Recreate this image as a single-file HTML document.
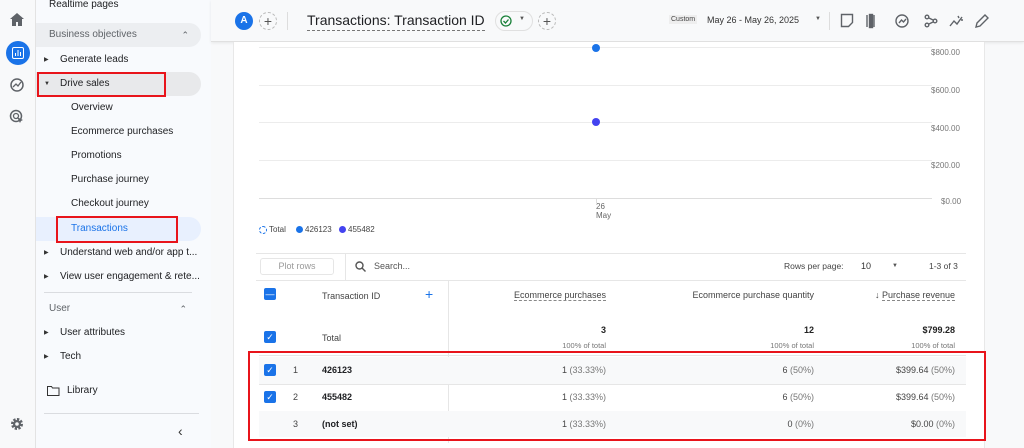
<!DOCTYPE html>
<html><head><meta charset="utf-8"><style>
*{box-sizing:border-box;margin:0;padding:0}
body{width:1024px;height:448px;overflow:hidden;background:#f8f9fa;font-family:"Liberation Sans",Arial,sans-serif;color:#202124;position:relative;font-size:10px}
.abs{position:absolute}
.rail{left:0;top:0;width:36px;height:448px;background:#f8f9fa;border-right:1px solid #e3e3e3}
.nav{left:36px;top:0;width:175px;height:448px;background:#f8fafd}
.nav .it{position:absolute;left:0;width:165px;height:24px;line-height:24px;font-size:10px;color:#202124}
.tri{position:absolute;left:8px;top:0;font-size:6px;color:#333}
.card{left:233px;top:42px;width:752px;height:406px;background:#fff;border-left:1px solid #e8e8e8;border-right:1px solid #e8e8e8}
.grid{position:absolute;left:259px;width:673px;height:1px;background:#ececec}
.yl{position:absolute;left:931px;font-size:8px;color:#777}
.cb{position:absolute;width:12px;height:12px;background:#1a73e8;border-radius:2px;color:#fff;font-size:9px;line-height:12px;text-align:center}
.r{position:absolute;text-align:right;font-size:9px;color:#444}
.g{color:#777}
</style></head><body>
<div class="abs rail">
 <svg class="abs" style="left:10px;top:13px" width="14" height="13" viewBox="0 0 14 13"><path d="M7 0L0 6h2v7h4V9h2v4h4V6h2z" fill="#5f6368"/></svg>
 <div class="abs" style="left:6px;top:41px;width:24px;height:24px;border-radius:12px;background:#1a73e8"></div>
 <svg class="abs" style="left:12px;top:47px" width="12" height="12"><rect x="0.5" y="0.5" width="11" height="11" rx="1.5" fill="none" stroke="#fff"/><path d="M3.5 9V6M6 9V3M8.5 9V5" stroke="#fff"/></svg>
 <svg class="abs" style="left:9px;top:77px" width="16" height="16"><circle cx="8" cy="8" r="6" fill="none" stroke="#5f6368" stroke-width="1.5"/><path d="M4 10l3-3 2 2 3-4" fill="none" stroke="#5f6368" stroke-width="1.3"/></svg>
 <svg class="abs" style="left:9px;top:109px" width="16" height="16"><circle cx="7" cy="7" r="5.5" fill="none" stroke="#5f6368" stroke-width="1.5"/><circle cx="7" cy="7" r="2.5" fill="none" stroke="#5f6368" stroke-width="1.3"/><path d="M8 8l6 3-2 1-1 2z" fill="#5f6368"/></svg>
 <svg class="abs" style="left:10px;top:417px" width="14" height="14" viewBox="0 0 14 14"><circle cx="7" cy="7" r="4.5" fill="none" stroke="#5f6368" stroke-width="3" stroke-dasharray="2.2 1.3"/><circle cx="7" cy="7" r="4" fill="#5f6368"/><circle cx="7" cy="7" r="1.8" fill="#f8f9fa"/></svg>
</div>
<div class="abs nav">
 <div class="it" style="top:-7px;left:13px">Realtime pages</div>
 <div class="it" style="top:23px;background:#eceef1;border-radius:0 12px 12px 0;padding-left:13px;color:#5f6368">Business objectives<span style="position:absolute;right:12px;font-size:9px">&#8963;</span></div>
 <div class="it" style="top:48px"><span class="tri">&#9654;</span><span style="margin-left:24px">Generate leads</span></div>
 <div class="it" style="top:72px;background:#e8e9eb;border-radius:0 12px 12px 0"><span class="tri">&#9660;</span><span style="margin-left:24px">Drive sales</span></div>
 <div class="abs" style="left:1px;top:72px;width:129px;height:25px;border:2px solid #e8141b"></div>
 <div class="it" style="top:96px;padding-left:35px">Overview</div>
 <div class="it" style="top:120px;padding-left:35px">Ecommerce purchases</div>
 <div class="it" style="top:144px;padding-left:35px">Promotions</div>
 <div class="it" style="top:168px;padding-left:35px">Purchase journey</div>
 <div class="it" style="top:192px;padding-left:35px">Checkout journey</div>
 <div class="it" style="top:217px;background:#e8f0fe;border-radius:0 12px 12px 0;padding-left:35px;color:#1a73e8">Transactions</div>
 <div class="abs" style="left:20px;top:216px;width:122px;height:27px;border:2px solid #e8141b"></div>
 <div class="it" style="top:241px;white-space:nowrap;overflow:hidden"><span class="tri">&#9654;</span><span style="margin-left:24px">Understand web and/or app t...</span></div>
 <div class="it" style="top:265px;white-space:nowrap;overflow:hidden"><span class="tri">&#9654;</span><span style="margin-left:24px">View user engagement &amp; rete...</span></div>
 <div class="abs" style="left:8px;top:292px;width:148px;height:1px;background:#dadce0"></div>
 <div class="it" style="top:297px;padding-left:13px;color:#5f6368">User<span style="position:absolute;right:14px;font-size:9px">&#8963;</span></div>
 <div class="it" style="top:321px"><span class="tri">&#9654;</span><span style="margin-left:24px">User attributes</span></div>
 <div class="it" style="top:345px"><span class="tri">&#9654;</span><span style="margin-left:24px">Tech</span></div>
 <svg class="abs" style="left:11px;top:386px" width="13" height="10"><path d="M0.5 0.5h4l1 1.5h6.5v7.5h-11.5z" fill="none" stroke="#333"/></svg>
 <div class="it" style="top:379px;padding-left:31px">Library</div>
 <div class="abs" style="left:8px;top:413px;width:155px;height:1px;background:#dadce0"></div>
 <div class="abs" style="left:142px;top:423px;font-size:14px;color:#333">&#8249;</div>
</div>
<div class="abs" style="left:211px;top:0;width:813px;height:42px;background:#f8f9fa;border-bottom:1px solid #e0e0e0;box-shadow:0 1px 3px rgba(0,0,0,.08)"></div>
<div class="abs" style="left:235px;top:12px;width:18px;height:18px;border-radius:9px;background:#1a73e8;color:#fff;font-size:10px;font-weight:bold;text-align:center;line-height:18px">A</div>
<div class="abs" style="left:259px;top:12px;width:18px;height:18px;border-radius:9px;border:1px dashed #bbb;text-align:center;line-height:16px;font-size:14px;color:#555">+</div>
<div class="abs" style="left:287px;top:12px;width:1px;height:18px;background:#ddd"></div>
<div class="abs" style="left:307px;top:11px;font-size:14px;color:#202124;border-bottom:1px dashed #777;line-height:19px;white-space:nowrap">Transactions: Transaction ID</div>
<div class="abs" style="left:495px;top:11px;width:38px;height:20px;border:1px solid #e0e0e0;border-radius:10px;background:#f8f9fa"></div>
<svg class="abs" style="left:500px;top:15px" width="12" height="12"><circle cx="6" cy="6" r="5" fill="none" stroke="#188038" stroke-width="1.3"/><path d="M3.5 6l2 2 3-3.5" fill="none" stroke="#188038" stroke-width="1.3"/></svg>
<div class="abs" style="left:519px;top:16px;font-size:6px;color:#555">&#9660;</div>
<div class="abs" style="left:538px;top:12px;width:18px;height:18px;border-radius:9px;border:1px dashed #bbb;text-align:center;line-height:16px;font-size:14px;color:#555">+</div>
<div class="abs" style="left:669px;top:15px;font-size:7px;color:#444;background:#eee;padding:1px 2px">Custom</div>
<div class="abs" style="left:707px;top:15px;font-size:9px;color:#333">May 26 - May 26, 2025</div>
<div class="abs" style="left:815px;top:16px;font-size:6px;color:#555">&#9660;</div>
<div class="abs" style="left:829px;top:12px;width:1px;height:18px;background:#ddd"></div>
<svg class="abs" style="left:840px;top:13px" width="150" height="16" fill="none" stroke="#5f6368" stroke-width="1.4">
 <path d="M1.5 1.5h11v8l-4 4h-7z"/>
 <path d="M27 2v12M34 2v12"/><rect x="29.5" y="1.5" width="3" height="13" fill="#5f6368"/>
 <circle cx="62" cy="8" r="6"/><path d="M59 10l2.5-3 2 2 2.5-3"/>
 <circle cx="95" cy="8" r="1.8"/><circle cx="87" cy="4" r="1.8"/><circle cx="87" cy="12" r="1.8"/><path d="M89 5l4 2M89 11l4-2"/>
 <path d="M110 13l4-5 3 3 5-7M118 3l1 2M121 7l2 0"/>
 <path d="M136 14l1-4 8-8 3 3-8 8z"/>
</svg>
<div class="abs card"></div>
<div class="grid" style="top:47px"></div>
<div class="grid" style="top:85px"></div>
<div class="grid" style="top:122px"></div>
<div class="grid" style="top:160px"></div>
<div class="grid" style="top:198px;background:#ddd"></div>
<div class="abs" style="left:596px;top:198px;width:1px;height:5px;background:#ddd"></div>
<div class="yl" style="top:48px">$800.00</div>
<div class="yl" style="top:86px">$600.00</div>
<div class="yl" style="top:124px">$400.00</div>
<div class="yl" style="top:161px">$200.00</div>
<div class="yl" style="top:197px;left:941px">$0.00</div>
<div class="abs" style="left:592px;top:44px;width:8px;height:8px;border-radius:4px;background:#1a73e8"></div>
<div class="abs" style="left:592px;top:118px;width:8px;height:8px;border-radius:4px;background:#4343f0"></div>
<div class="abs" style="left:596px;top:202px;font-size:8px;color:#666;line-height:9px">26<br>May</div>
<div class="abs" style="left:259px;top:226px;width:8px;height:8px;border-radius:4px;border:1px dashed #1a73e8"></div>
<div class="abs" style="left:269px;top:225px;font-size:8px;color:#444">Total</div>
<div class="abs" style="left:296px;top:226px;width:7px;height:7px;border-radius:4px;background:#1a73e8"></div>
<div class="abs" style="left:305px;top:225px;font-size:8px;color:#444">426123</div>
<div class="abs" style="left:339px;top:226px;width:7px;height:7px;border-radius:4px;background:#4343f0"></div>
<div class="abs" style="left:348px;top:225px;font-size:8px;color:#444">455482</div>
<div class="abs" style="left:256px;top:253px;width:710px;height:1px;background:#e6e6e6"></div>
<div class="abs" style="left:260px;top:258px;width:74px;height:17px;border:1px solid #e6e6e6;border-radius:3px;font-size:9px;color:#999;text-align:center;line-height:15px">Plot rows</div>
<div class="abs" style="left:345px;top:253px;width:1px;height:28px;background:#e6e6e6"></div>
<svg class="abs" style="left:355px;top:261px" width="11" height="11" fill="none" stroke="#555" stroke-width="1.4"><circle cx="4.5" cy="4.5" r="3.5"/><path d="M7 7l3.5 3.5"/></svg>
<div class="abs" style="left:374px;top:261px;font-size:9px;color:#555">Search...</div>
<div class="abs" style="left:784px;top:261px;font-size:8.5px;color:#444">Rows per page:</div>
<div class="abs" style="left:861px;top:261px;font-size:9px;color:#333">10</div>
<div class="abs" style="left:892px;top:263px;font-size:6px;color:#555">&#9660;</div>
<div class="abs" style="left:929px;top:261px;font-size:8.5px;color:#444">1-3 of 3</div>
<div class="abs" style="left:256px;top:280px;width:710px;height:1px;background:#e6e6e6"></div>
<div class="abs" style="left:448px;top:281px;width:1px;height:162px;background:#e6e6e6"></div>
<div class="cb" style="left:264px;top:288px">&#8212;</div>
<div class="abs" style="left:322px;top:291px;font-size:9px;color:#444">Transaction ID</div>
<div class="abs" style="left:425px;top:286px;font-size:14px;color:#1a73e8">+</div>
<div class="r" style="left:480px;width:126px;top:290px;color:#444"><span style="border-bottom:1px dashed #888">Ecommerce purchases</span></div>
<div class="r" style="left:650px;width:164px;top:290px;color:#444">Ecommerce purchase quantity</div>
<div class="r" style="left:830px;width:125px;top:290px;color:#444">&#8595; <span style="border-bottom:1px dashed #888">Purchase revenue</span></div>
<div class="cb" style="left:264px;top:331px">&#10003;</div>
<div class="abs" style="left:322px;top:333px;font-size:9px;color:#444">Total</div>
<div class="r" style="left:500px;width:106px;top:325px;font-weight:bold;color:#222">3</div>
<div class="r" style="left:500px;width:106px;top:341px;font-size:7.5px"><span class="g">100% of total</span></div>
<div class="r" style="left:700px;width:114px;top:325px;font-weight:bold;color:#222">12</div>
<div class="r" style="left:700px;width:114px;top:341px;font-size:7.5px"><span class="g">100% of total</span></div>
<div class="r" style="left:850px;width:105px;top:325px;font-weight:bold;color:#222">$799.28</div>
<div class="r" style="left:850px;width:105px;top:341px;font-size:7.5px"><span class="g">100% of total</span></div>
<div class="abs" style="left:259px;top:355px;width:707px;height:1px;background:#e6e6e6"></div>
<div class="abs" style="left:259px;top:357px;width:707px;height:27px;background:#f8f9fa"></div>
<div class="abs" style="left:259px;top:384px;width:707px;height:1px;background:#e6e6e6"></div>
<div class="abs" style="left:259px;top:411px;width:707px;height:1px;background:#e6e6e6"></div>
<div class="abs" style="left:259px;top:411px;width:707px;height:26px;background:#f8f9fa"></div>
<div class="cb" style="left:264px;top:364px">&#10003;</div>
<div class="abs" style="left:293px;top:365px;font-size:9px;color:#444">1</div>
<div class="abs" style="left:322px;top:365px;font-size:9px;font-weight:bold">426123</div>
<div class="r" style="left:500px;width:106px;top:365px">1 <span class="g">(33.33%)</span></div>
<div class="r" style="left:700px;width:114px;top:365px">6 <span class="g">(50%)</span></div>
<div class="r" style="left:850px;width:105px;top:365px">$399.64 <span class="g">(50%)</span></div>
<div class="cb" style="left:264px;top:391px">&#10003;</div>
<div class="abs" style="left:293px;top:392px;font-size:9px;color:#444">2</div>
<div class="abs" style="left:322px;top:392px;font-size:9px;font-weight:bold">455482</div>
<div class="r" style="left:500px;width:106px;top:392px">1 <span class="g">(33.33%)</span></div>
<div class="r" style="left:700px;width:114px;top:392px">6 <span class="g">(50%)</span></div>
<div class="r" style="left:850px;width:105px;top:392px">$399.64 <span class="g">(50%)</span></div>
<div class="abs" style="left:293px;top:419px;font-size:9px;color:#444">3</div>
<div class="abs" style="left:322px;top:419px;font-size:9px;font-weight:bold">(not set)</div>
<div class="r" style="left:500px;width:106px;top:419px">1 <span class="g">(33.33%)</span></div>
<div class="r" style="left:700px;width:114px;top:419px">0 <span class="g">(0%)</span></div>
<div class="r" style="left:850px;width:105px;top:419px">$0.00 <span class="g">(0%)</span></div>
<div class="abs" style="left:248px;top:351px;width:738px;height:90px;border:2px solid #e8141b"></div>
</body></html>
